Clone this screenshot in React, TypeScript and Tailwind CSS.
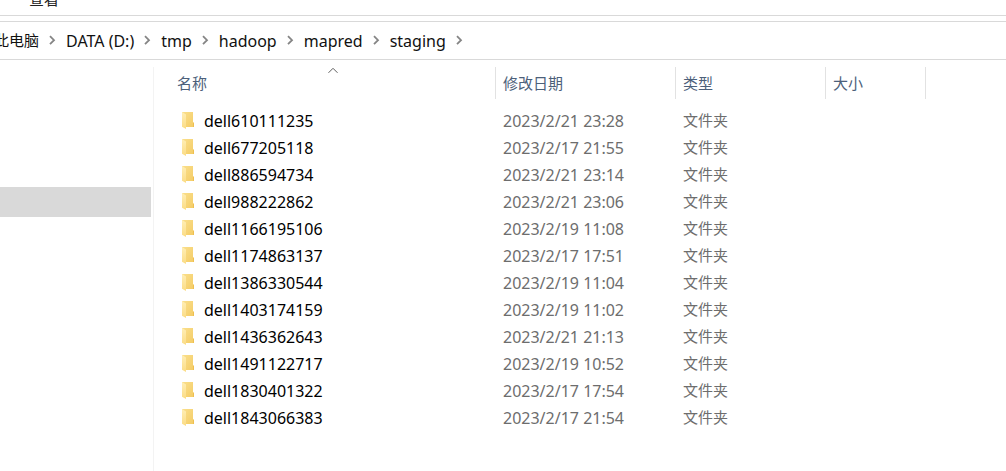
const crumbs = ["此电脑", "DATA (D:)", "tmp", "hadoop", "mapred", "staging"];

const folders = [
  { name: "dell610111235", date: "2023/2/21 23:28" },
  { name: "dell677205118", date: "2023/2/17 21:55" },
  { name: "dell886594734", date: "2023/2/21 23:14" },
  { name: "dell988222862", date: "2023/2/21 23:06" },
  { name: "dell1166195106", date: "2023/2/19 11:08" },
  { name: "dell1174863137", date: "2023/2/17 17:51" },
  { name: "dell1386330544", date: "2023/2/19 11:04" },
  { name: "dell1403174159", date: "2023/2/19 11:02" },
  { name: "dell1436362643", date: "2023/2/21 21:13" },
  { name: "dell1491122717", date: "2023/2/19 10:52" },
  { name: "dell1830401322", date: "2023/2/17 17:54" },
  { name: "dell1843066383", date: "2023/2/17 21:54" },
];

const columns = [
  { label: "名称", sorted: true },
  { label: "修改日期", sorted: false },
  { label: "类型", sorted: false },
  { label: "大小", sorted: false },
];

function Chevron() {
  return (
    <svg width="7" height="12" viewBox="0 0 7 12" fill="none" stroke="#858585" strokeWidth="1.8" className="mx-2.5 shrink-0" aria-hidden="true">
      <path d="M1 1.2L5 5.2L1 9.2" />
    </svg>
  );
}

function SortCaret() {
  return (
    <svg width="11" height="7" viewBox="0 0 11 7" fill="none" stroke="#5c5c5c" strokeWidth="1" className="absolute top-0 left-1/2 -translate-x-1/2" aria-hidden="true">
      <path d="M1 5.8L5.5 1.3L10 5.8" />
    </svg>
  );
}

function FolderIcon() {
  return (
    <svg width="12" height="17" viewBox="0 0 12 17" className="shrink-0" aria-hidden="true">
      <defs>
        <linearGradient id="back" x1="0" y1="0" x2="1" y2="1">
          <stop offset="0" stopColor="#fadf8c" />
          <stop offset="1" stopColor="#f4cc66" />
        </linearGradient>
        <linearGradient id="flap" x1="0" y1="0" x2="0" y2="1">
          <stop offset="0" stopColor="#ffeeb5" />
          <stop offset="1" stopColor="#fbdc85" />
        </linearGradient>
      </defs>
      <path d="M0 0H11V10L12 11V15H3L0 14Z" fill="url(#back)" />
      <path d="M11 10.5L12 11V15H11Z" fill="#eebf50" />
      <path d="M0 0L4 2.5V17L0 14.8Z" fill="url(#flap)" />
    </svg>
  );
}

export default function App() {
  return (
    <div className="flex min-h-screen flex-col bg-white font-['Noto_Sans','Noto_Sans_CJK_SC',sans-serif] text-base text-black">
      <header className="flex h-4 items-end overflow-hidden border-b border-[#d9d9d9] px-[29px] pb-2">
        <button type="button" className="text-[15px] leading-4 text-[#222]">查看</button>
      </header>

      <nav aria-label="路径" className="mt-[5px] overflow-hidden border-y border-[#d9d9d9]">
        <ol className="-ml-1.5 flex h-[37px] items-center">
          {crumbs.map((crumb, i) => (
            <li key={crumb} className="flex items-center whitespace-nowrap text-[#111]">
              <a href="#" className={i === 0 ? "text-[15px]" : "text-base"}>{crumb}</a>
              <Chevron />
            </li>
          ))}
        </ol>
      </nav>

      <div className="mt-[7px] flex grow">
        <aside className="w-[154px] shrink-0 border-r border-[#f3f3f3] pt-[120px] pr-0.5">
          <div className="h-[30px] bg-[#d9d9d9]" />
        </aside>

        <main className="grow pl-4">
          <table className="table-fixed border-collapse text-left">
            <colgroup>
              <col className="w-[326px]" />
              <col className="w-[180px]" />
              <col className="w-[150px]" />
              <col className="w-[100px]" />
            </colgroup>
            <thead>
              <tr>
                {columns.map((column) => (
                  <th key={column.label} className="p-0 pb-2 text-[15px] font-normal text-[#4c607a]">
                    <button type="button" className="relative flex h-8 w-full items-center border-r border-[#e2e2e2] px-[7px]">
                      {column.sorted && <SortCaret />}
                      {column.label}
                    </button>
                  </th>
                ))}
              </tr>
            </thead>
            <tbody>
              {folders.map((folder) => (
                <tr key={folder.name} className="h-[27px] whitespace-nowrap">
                  <td className="p-0 pl-3">
                    <div className="flex items-center gap-2.5">
                      <FolderIcon />
                      {folder.name}
                    </div>
                  </td>
                  <td className="p-0 pl-[7px] text-[#6d6d6d]">{folder.date}</td>
                  <td className="p-0 pl-[7px] text-[15px] text-[#6d6d6d]">文件夹</td>
                  <td className="p-0" />
                </tr>
              ))}
            </tbody>
          </table>
        </main>
      </div>
    </div>
  );
}
